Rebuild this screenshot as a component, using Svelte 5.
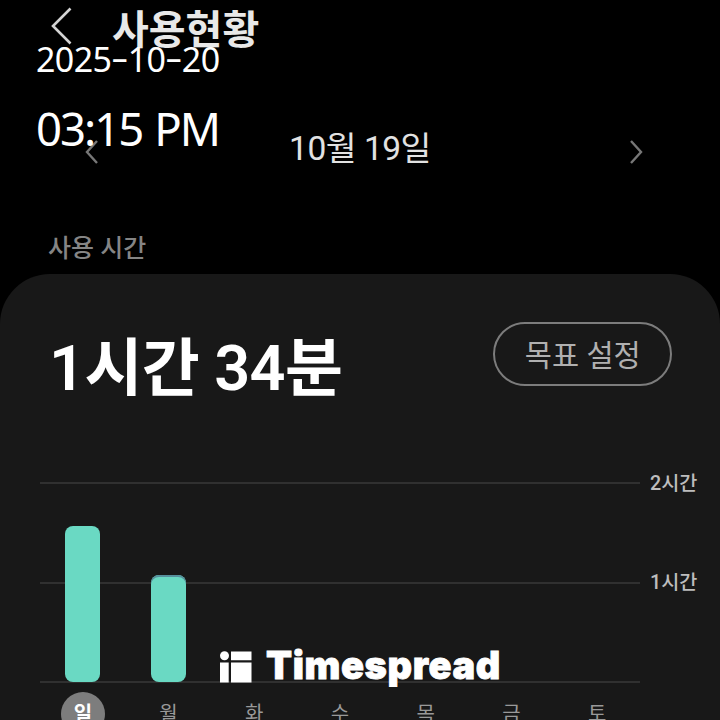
<script lang="ts">
	const HOUR = 99.5;

	let usage = $state([
		{ day: '일', hours: 1.57, active: true },
		{ day: '월', hours: 1.08, limit: true },
		{ day: '화', hours: 0 },
		{ day: '수', hours: 0 },
		{ day: '목', hours: 0 },
		{ day: '금', hours: 0 },
		{ day: '토', hours: 0 }
	]);

	const axis = ['2시간', '1시간', ''];
</script>

<div class="screen">
	<header>
		<svg class="back" width="24" height="40" viewBox="0 0 24 40">
			<path d="M20.5 2.5 3 20l17.5 17.5" />
		</svg>
		<h1>사용현황</h1>
	</header>

	<nav>
		<svg width="16" height="26" viewBox="0 0 16 26">
			<path d="M13 2 3 13l10 11" />
		</svg>
		<span class="date">10월 19일</span>
		<svg width="16" height="26" viewBox="0 0 16 26">
			<path d="m3 2 10 11L3 24" />
		</svg>
	</nav>

	<h2>사용 시간</h2>

	<section class="card">
		<div class="summary">
			<strong>1시간 34분</strong>
			<button>목표 설정</button>
		</div>

		<!-- Weekly chart -->
		<div class="chart">
			<div class="grid">
				{#each axis as label}
					<div class="line"><i></i><span>{label}</span></div>
				{/each}
			</div>
			<div class="bars">
				{#each usage as item}
					<div class="slot">
						{#if item.hours}
							<div class="bar" class:limit={item.limit} style="height: {item.hours * HOUR}px"></div>
						{/if}
					</div>
				{/each}
			</div>
		</div>
		<div class="days">
			{#each usage as item}
				<span class="day" class:active={item.active}>{item.day}</span>
			{/each}
		</div>
	</section>

	<!-- Capture stamp -->
	<div class="stamp">
		<div class="stamp-date">2025<b>-</b>10<b>-</b>20</div>
		<div class="stamp-time">03:15 PM</div>
	</div>

	<div class="brand">
		<svg width="32" height="32" viewBox="0 0 32 32">
			<circle cx="4.5" cy="4.8" r="4.5" />
			<path d="M11 .5h20.5v8.7H11zM0 11.5h8.7v20H0zM11 11.5h20.5v20H11z" />
		</svg>
		<span>Timespread</span>
	</div>
</div>

<style>
	:global(body) {
		background: #000;
	}

	.screen {
		position: relative;
		width: 720px;
		height: 720px;
		overflow: hidden;
		background: #000;
		color: #e8e8e8;
		font-family: Roboto, 'Noto Sans CJK KR', sans-serif;
	}

	svg {
		display: block;
		flex: none;
	}

	header {
		display: flex;
		align-items: center;
		gap: 38px;
		height: 55px;
		padding-left: 50px;
		box-sizing: border-box;
	}

	header path,
	nav path {
		fill: none;
		stroke: #d4d4d4;
		stroke-width: 2.6;
	}

	.back {
		margin-top: -3px;
	}

	h1 {
		margin: 6px 0 0;
		font-size: 40px;
		line-height: 55px;
		font-weight: 700;
	}

	nav {
		display: flex;
		align-items: center;
		justify-content: space-between;
		height: 60px;
		margin-top: 65px;
		padding: 0 76px 0 84px;
	}

	nav svg {
		margin-top: 3px;
	}

	nav path {
		stroke: #777;
		stroke-width: 2.4;
	}

	.date {
		margin: -3px 8px 0 0;
		font-size: 33.5px;
		line-height: 60px;
		letter-spacing: -0.5px;
		color: #e2e2e2;
	}

	h2 {
		margin: 52px 0 0 48px;
		height: 42px;
		font-size: 25px;
		line-height: 34px;
		font-weight: 500;
		color: #858585;
	}

	.card {
		height: 446px;
		border-radius: 50px 50px 0 0;
		background: #181818;
	}

	.summary {
		display: flex;
		align-items: flex-start;
		justify-content: space-between;
		height: 208px;
		padding: 48px 48px 0 49px;
		box-sizing: border-box;
	}

	strong {
		margin-top: 1px;
		font-size: 63px;
		line-height: 92px;
		font-weight: 600;
		letter-spacing: -0.6px;
		color: #fff;
	}

	button {
		width: 179.5px;
		height: 64px;
		padding: 3px 0 0 1px;
		border: 2px solid #7c7c7c;
		border-radius: 32px;
		background: transparent;
		font: 400 29.5px/56px Roboto, 'Noto Sans CJK KR', sans-serif;
		color: #b0b0b0;
	}

	.chart {
		display: grid;
		height: 201px;
	}

	.grid,
	.bars {
		grid-area: 1 / 1;
	}

	.grid {
		display: flex;
		flex-direction: column;
		justify-content: space-between;
	}

	.line {
		display: flex;
		align-items: center;
		gap: 10px;
		height: 2px;
		padding-left: 40px;
	}

	.line i {
		width: 600px;
		height: 2px;
		background: #303030;
	}

	.line span {
		padding-top: 1px;
		font-size: 19.7px;
		line-height: 28px;
		font-weight: 500;
		color: #bdbdbd;
	}

	.bars,
	.days {
		display: grid;
		grid-template-columns: repeat(7, 1fr);
		width: 600px;
		margin-left: 40px;
	}

	.slot {
		display: flex;
		align-items: flex-end;
		justify-content: center;
		padding-bottom: 1px;
	}

	.bar {
		width: 35px;
		border-radius: 8px;
		background: #6ad9c3;
	}

	.limit {
		box-shadow: inset 0 2px 0 #568f9c;
	}

	.days {
		justify-items: center;
		margin-top: 9px;
	}

	.day {
		width: 44px;
		height: 44px;
		border-radius: 50%;
		font-size: 20px;
		line-height: 44px;
		text-align: center;
		color: #999;
	}

	.day.active {
		background: #7d7d7d;
		font-weight: 700;
		color: #fff;
	}

	.stamp {
		position: absolute;
		top: 35px;
		left: 36px;
		font-family: 'Noto Sans', sans-serif;
		color: #fff;
		white-space: nowrap;
	}

	.stamp-date {
		font-size: 34px;
		line-height: 48px;
		letter-spacing: -0.6px;
	}

	/* wider dashes between the date parts */
	.stamp-date b {
		display: inline-block;
		margin: 0 3px;
		font-weight: 400;
		transform: translateY(-2px) scaleX(1.6);
	}

	.stamp-time {
		margin-top: 13px;
		font-size: 45.5px;
		line-height: 64px;
		letter-spacing: -2px;
		word-spacing: 2px;
	}

	.brand {
		position: absolute;
		top: 640px;
		left: 220px;
		display: flex;
		align-items: center;
		gap: 14px;
		height: 50px;
		color: #fff;
	}

	.brand svg {
		margin-top: 3px;
		fill: #fff;
	}

	.brand span {
		font: 900 38px/50px Inter, sans-serif;
		letter-spacing: 0.6px;
		-webkit-text-stroke: 0.8px #fff;
		white-space: nowrap;
	}
</style>
